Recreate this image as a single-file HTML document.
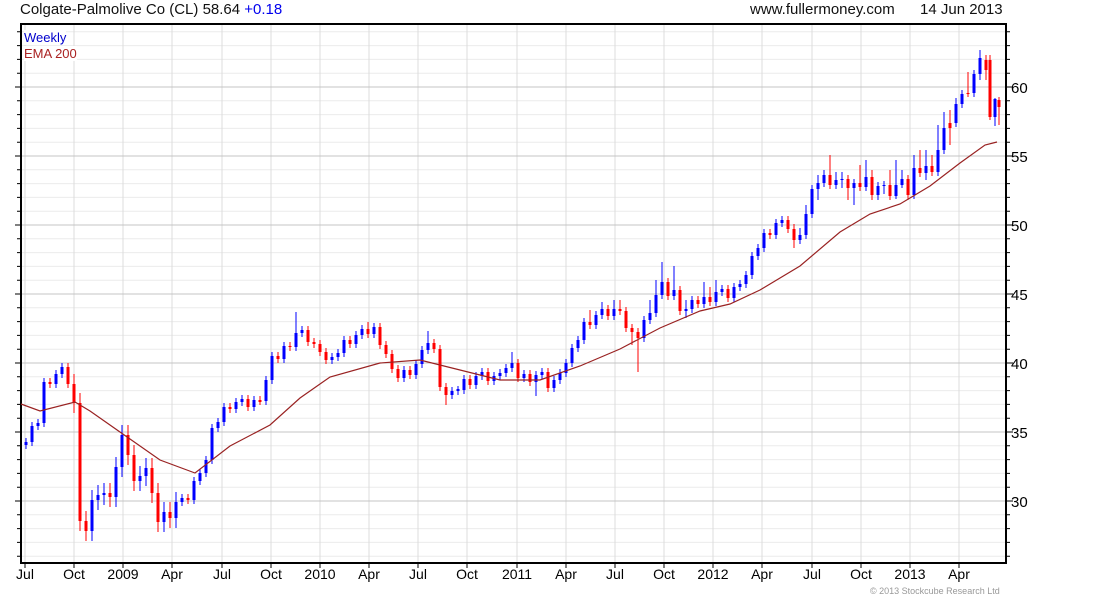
<!DOCTYPE html>
<html><head><meta charset="utf-8"><style>
html,body{margin:0;padding:0;background:#fff;width:1100px;height:600px;overflow:hidden;font-family:"Liberation Sans",sans-serif}
.t{position:absolute;font-size:15px;color:#111;white-space:nowrap}
svg{position:absolute;left:0;top:0}
</style></head><body>
<svg width="1100" height="600" xmlns="http://www.w3.org/2000/svg" font-family="Liberation Sans, sans-serif">
<path fill="none" stroke="#ececec" d="M21 45.6H1006M21 59.4H1006M21 73.2H1006M21 100.8H1006M21 114.6H1006M21 128.4H1006M21 142.2H1006M21 169.8H1006M21 183.6H1006M21 197.4H1006M21 211.2H1006M21 238.8H1006M21 252.6H1006M21 266.4H1006M21 280.2H1006M21 307.8H1006M21 321.6H1006M21 335.4H1006M21 349.2H1006M21 376.8H1006M21 390.6H1006M21 404.4H1006M21 418.2H1006M21 445.8H1006M21 459.6H1006M21 473.4H1006M21 487.2H1006M21 514.8H1006M21 528.6H1006M21 542.4H1006M21 556.2H1006M21 31.8H1006"/>
<path fill="none" stroke="#dcdcdc" d="M25 24V563M74 24V563M123 24V563M172 24V563M222 24V563M271 24V563M320 24V563M369 24V563M418 24V563M467 24V563M517 24V563M566 24V563M615 24V563M664 24V563M713 24V563M762 24V563M812 24V563M861 24V563M910 24V563M959 24V563"/>
<path fill="none" stroke="#c4c4c4" d="M21 87H1006M21 156H1006M21 225H1006M21 294H1006M21 363H1006M21 432H1006M21 501H1006"/>
<g font-size="15">
<text x="1011" y="93">60</text><text x="1011" y="162">55</text><text x="1011" y="231">50</text><text x="1011" y="300">45</text><text x="1011" y="369">40</text><text x="1011" y="438">35</text><text x="1011" y="507">30</text>
</g>
<path fill="none" stroke="#000" d="M1006 31.8h4M1006 45.6h4M1006 59.4h4M1006 73.2h4M1006 87h7M1006 100.8h4M1006 114.6h4M1006 128.4h4M1006 142.2h4M1006 156h7M1006 169.8h4M1006 183.6h4M1006 197.4h4M1006 211.2h4M1006 225h7M1006 238.8h4M1006 252.6h4M1006 266.4h4M1006 280.2h4M1006 294h7M1006 307.8h4M1006 321.6h4M1006 335.4h4M1006 349.2h4M1006 363h7M1006 376.8h4M1006 390.6h4M1006 404.4h4M1006 418.2h4M1006 432h7M1006 445.8h4M1006 459.6h4M1006 473.4h4M1006 487.2h4M1006 501h7M1006 514.8h4M1006 528.6h4M1006 542.4h4M1006 556.2h4
M25 563v5M74 563v5M123 563v5M172 563v5M222 563v5M271 563v5M320 563v5M369 563v5M418 563v5M467 563v5M517 563v5M566 563v5M615 563v5M664 563v5M713 563v5M762 563v5M812 563v5M861 563v5M910 563v5M959 563v5
M17 31.8h4M17 45.6h4M17 59.4h4M17 73.2h4M15 87h6M17 100.8h4M17 114.6h4M17 128.4h4M17 142.2h4M15 156h6M17 169.8h4M17 183.6h4M17 197.4h4M17 211.2h4M15 225h6M17 238.8h4M17 252.6h4M17 266.4h4M17 280.2h4M15 294h6M17 307.8h4M17 321.6h4M17 335.4h4M17 349.2h4M15 363h6M17 376.8h4M17 390.6h4M17 404.4h4M17 418.2h4M15 432h6M17 445.8h4M17 459.6h4M17 473.4h4M17 487.2h4M15 501h6M17 514.8h4M17 528.6h4M17 542.4h4M17 556.2h4"/>
<g font-size="14" text-anchor="middle">
<text x="25" y="579">Jul</text><text x="74" y="579">Oct</text><text x="123" y="579">2009</text><text x="172" y="579">Apr</text><text x="222" y="579">Jul</text><text x="271" y="579">Oct</text><text x="320" y="579">2010</text><text x="369" y="579">Apr</text><text x="418" y="579">Jul</text><text x="467" y="579">Oct</text><text x="517" y="579">2011</text><text x="566" y="579">Apr</text><text x="615" y="579">Jul</text><text x="664" y="579">Oct</text><text x="713" y="579">2012</text><text x="762" y="579">Apr</text><text x="812" y="579">Jul</text><text x="861" y="579">Oct</text><text x="910" y="579">2013</text><text x="959" y="579">Apr</text>
</g>
<rect x="21" y="24" width="985" height="539" fill="none" stroke="#000" stroke-width="2"/>
<!-- blue candles -->
<path fill="none" stroke="#0000ff" stroke-width="1" d="M26 438V449M32 422V446M38 419V430M44 378V427M56 370V388M62 363V378M92 490V541M98 485V510M104 483V505M116 457V507M122 425V477M140 466V491M146 458V486M164 502V532M176 492V528M182 494V506M194 477V504M200 469V485M206 456V477M212 424V464M218 418V432M224 403V426M236 398V413M242 395V406M254 396V411M266 376V405M272 352V384M284 342V363M296 312V351M302 326V337M332 353V364M338 349V361M344 336V357M356 331V348M362 325V339M374 323V338M404 366V382M416 360V379M422 346V368M428 331V354M452 387V399M458 386V395M464 375V394M476 372V389M482 368V380M494 372V385M500 369V380M506 364V377M512 352V372M524 370V382M536 371V396M542 368V379M554 376V392M560 369V384M566 359V377M572 344V367M578 336V352M584 318V344M596 311V329M602 302V319M614 300V320M644 316V342M650 300V324M656 280V317M662 262V299M674 266V300M686 300V318M692 296V313M704 282V308M716 280V306M722 285V296M734 283V302M740 280V291M746 271V288M752 252V279M758 244V260M764 229V252M776 219V239M782 216V227M800 228V244M806 205V239M812 185V218M818 175V200M824 170V187M836 172V189M842 172V188M854 179V205M866 160V191M878 182V200M884 181V194M896 160V199M902 170V188M914 155V199M926 150V180M938 125V176M944 112V154M956 98V127M962 90V108M974 70V97M980 50V80M995 98V126"/>
<path fill="none" stroke="#0000ff" stroke-width="3" d="M26 445V442M32 442V426M38 426V423M44 423V382M56 384V374M62 374V367M92 531V500M98 500V495M104 495V493M116 497V467M122 467V435M140 481V476M146 476V468M164 522V512M176 518V502M182 502V498M194 500V481M200 481V473M206 473V460M212 460V428M218 428V422M224 422V407M236 409V402M242 402V399M254 407V400M266 401V380M272 380V356M284 359V346M296 347V333M302 333V330M332 360V357M338 357V353M344 353V340M356 344V335M362 335V329M374 334V327M404 378V370M416 375V364M422 364V350M428 350V343M452 395V391M458 391V389M464 390V379M476 385V376M482 376V372M494 381V376M500 376V373M506 373V368M512 368V363M524 378V374M536 382V375M542 375V372M554 388V380M560 380V373M566 373V363M572 363V348M578 348V340M584 340V322M596 325V315M602 315V309M614 316V309M644 338V320M650 320V313M656 313V295M662 295V282M674 296V290M686 311V309M692 309V300M704 304V297M716 302V292M722 292V289M734 298V287M740 287V284M746 284V275M752 275V256M758 256V248M764 248V233M776 235V223M782 223V220M800 240V235M806 235V214M812 214V189M818 189V183M824 183V175M836 185V180M842 180V179M854 188V183M866 187V177M878 195V186M884 186V185M896 196V185M902 185V179M914 195V168M926 173V166M938 172V150M944 150V128M956 123V104M962 104V94M974 93V74M980 74V58M995 117V99"/>
<!-- red candles -->
<path fill="none" stroke="#ff0000" stroke-width="1" d="M50 378V388M68 363V388M74 374V413M80 393V531M86 511V541M110 483V507M128 425V465M134 445V491M152 458V503M158 483V532M170 502V528M188 494V504M230 403V413M248 395V411M260 396V405M278 352V363M290 342V351M308 326V346M314 338V348M320 340V356M326 348V364M350 336V348M368 322V338M380 323V349M386 341V358M392 350V373M398 365V382M410 366V379M434 339V353M440 345V391M446 383V405M470 375V389M488 368V385M518 359V382M530 370V386M548 368V392M590 310V329M608 305V320M620 300V315M626 307V332M632 324V345M638 328V372M668 278V300M680 286V315M698 296V308M710 287V306M728 285V302M770 229V239M788 216V233M794 224V248M830 155V189M848 175V200M860 165V191M872 170V200M890 170V200M908 175V200M920 150V177M932 155V176M950 110V145M968 72V97M986 55V80M990 55V120M999 97V125"/>
<path fill="none" stroke="#ff0000" stroke-width="3" d="M50 382V384M68 367V384M74 384V403M80 403V521M86 521V531M110 493V497M128 435V455M134 455V481M152 468V493M158 493V522M170 512V518M188 498V500M230 407V409M248 399V407M260 400V402M278 356V359M290 346V347M308 330V342M314 342V344M320 344V352M326 352V360M350 340V344M368 329V334M380 327V345M386 345V354M392 354V369M398 369V378M410 370V375M434 343V349M440 349V387M446 387V395M470 379V385M488 372V381M518 363V378M530 374V382M548 372V388M590 322V325M608 309V316M620 309V311M626 311V328M632 328V332M638 332V338M668 282V296M680 290V311M698 300V304M710 297V302M728 289V298M770 233V235M788 220V229M794 229V240M830 175V185M848 179V188M860 183V187M872 177V195M890 185V196M908 179V195M920 168V173M932 166V172M950 128V123M968 94V93M986 60V70M990 60V117M999 100V107"/>
<path fill="none" stroke="#992222" stroke-width="1.2" d="M21 404L40 411L75 402L90 411L130 439L160 460L195 473L230 446L270 425L300 398L330 377L380 363L420 360L460 370L500 380L540 380L580 366L620 349L660 328L700 311L730 304L760 290L800 266L840 232L870 214L900 204L930 186L960 163L985 145L997 142"/>
</svg>
<div class="t" style="left:20px;top:1px">Colgate-Palmolive Co (CL) 58.64 <span style="color:#0000ee">+0.18</span></div>
<div class="t" style="left:750px;top:1px">www.fullermoney.com</div>
<div class="t" style="left:920px;top:1px">14 Jun 2013</div>
<div class="t" style="left:24px;top:30px;font-size:13px;color:#0000cc;background:#fff">Weekly</div>
<div class="t" style="left:24px;top:46px;font-size:13px;color:#aa2222;background:#fff">EMA 200</div>
<div class="t" style="left:870px;top:586px;font-size:9px;color:#999">© 2013 Stockcube Research Ltd</div>
</body></html>
